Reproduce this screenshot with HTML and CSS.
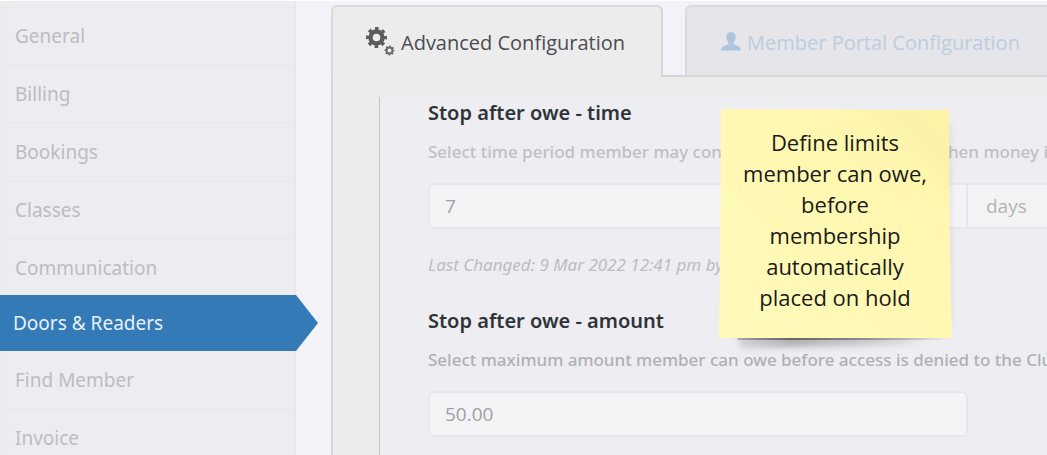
FILE: index.html
```html
<!DOCTYPE html>
<html lang="en">
<head>
    <meta charset="UTF-8">
    <title>Settings - Doors &amp; Readers</title>
    <link rel="stylesheet" href="styles.css">
</head>
<body>
    <div class="page">
        <nav class="sidebar">
            <a href="#">General</a>
            <a href="#">Billing</a>
            <a href="#">Bookings</a>
            <a href="#">Classes</a>
            <a href="#">Communication</a>
            <a href="#" class="active">Doors &amp; Readers</a>
            <a href="#">Find Member</a>
            <a href="#">Invoice</a>
        </nav>
        <main class="main">
            <div class="tabs">
                <a href="#" class="tab active">
                    <svg class="icon-cogs" viewBox="0 0 30 30" aria-hidden="true">
                        <circle cx="11.5" cy="10.5" r="6" fill="none" stroke="#5c5c5e" stroke-width="4.4"/>
                        <circle cx="11.5" cy="10.5" r="9" fill="none" stroke="#5c5c5e" stroke-width="3" stroke-dasharray="3.534 3.534" stroke-dashoffset="1.767"/>
                        <circle cx="24.5" cy="23.5" r="3" fill="none" stroke="#68686a" stroke-width="2"/>
                        <circle cx="24.5" cy="23.5" r="4.3" fill="none" stroke="#68686a" stroke-width="1.4" stroke-dasharray="1.69 1.69" stroke-dashoffset="0.84"/>
                    </svg>
                    Advanced Configuration
                </a>
                <a href="#" class="tab">
                    <svg class="icon-user" viewBox="0 0 20 20" aria-hidden="true">
                        <path d="M10 0.3C6.8 0.3 5.3 2.2 5.4 5C5.5 7.4 6.3 9.4 7.5 10.6C7.8 11.8 7.2 12.4 5.8 13L2.2 14.4C0.6 15.1 0 16.4 0 18.6H20C20 16.4 19.4 15.1 17.8 14.4L14.2 13C12.8 12.4 12.2 11.8 12.5 10.6C13.7 9.4 14.5 7.4 14.6 5C14.7 2.2 13.2 0.3 10 0.3Z" fill="#adc5dd"/>
                    </svg>
                    Member Portal Configuration
                </a>
            </div>
            <div class="panel">
                <form class="settings">
                    <div class="setting">
                        <label class="title" for="oweTime">Stop after owe - time</label>
                        <p class="help">Select time period member may continue to obtain full access when money is owed</p>
                        <div class="field">
                            <input type="text" id="oweTime" value="7">
                            <span class="unit">days</span>
                        </div>
                        <p class="changed">Last Changed: 9 Mar 2022 12:41 pm by</p>
                    </div>
                    <div class="setting">
                        <label class="title" for="oweAmount">Stop after owe - amount</label>
                        <p class="help strong">Select maximum amount member can owe before access is denied to the Club</p>
                        <div class="field single">
                            <input type="text" id="oweAmount" value="50.00">
                        </div>
                    </div>
                </form>
            </div>
        </main>
    </div>
    <aside class="note">
        <svg class="note-paper" viewBox="0 0 260 270" aria-hidden="true">
            <defs>
                <linearGradient id="paper" x1="0" y1="1" x2="1" y2="0">
                    <stop offset="0" stop-color="#fffabc"/>
                    <stop offset="0.78" stop-color="#fff7ae"/>
                    <stop offset="0.88" stop-color="#faf2a8"/>
                    <stop offset="1" stop-color="#fdf4a4"/>
                </linearGradient>
                <linearGradient id="shade" x1="0" y1="0" x2="1" y2="0">
                    <stop offset="0" stop-color="#555" stop-opacity="0.35"/>
                    <stop offset="0.25" stop-color="#555" stop-opacity="0.8"/>
                    <stop offset="0.6" stop-color="#555" stop-opacity="0.5"/>
                    <stop offset="1" stop-color="#555" stop-opacity="0"/>
                </linearGradient>
                <filter id="soft" x="-20%" y="-60%" width="140%" height="220%">
                    <feGaussianBlur stdDeviation="3"/>
                </filter>
            </defs>
            <path d="M28 234L240 234L190 245L30 248Z" fill="url(#shade)" opacity="0.5" filter="url(#soft)"/>
            <path d="M222 20L241 24L242 225L232 225Z" fill="#888" opacity="0.15" filter="url(#soft)"/>
            <path d="M26 237H243L230 240H28Z" fill="url(#shade)"/>
            <path d="M11 9L239 10Q239 130 242 238H9Q11 110 11 9Z" fill="url(#paper)"/>
        </svg>
        <p>Define limits member can owe, before membership automatically placed on hold</p>
    </aside>
</body>
</html>
```
FILE: styles.css
```css
* {
    box-sizing: border-box;
}
body {
    margin: 0;
    font-family: "Open Sans", "Noto Sans", sans-serif;
    font-size: 18px;
    background-color: #f3f2f9;
    overflow: hidden;
}
p {
    margin: 0;
}
a {
    text-decoration: none;
}
.page {
    display: flex;
    min-height: 100vh;
    border-top: 1px solid #fff;
}

/* sidebar */
.sidebar {
    width: 296px;
    flex-shrink: 0;
    padding-top: 5px;
    border-left: 2px solid #efeaea;
    border-right: 2px solid #ebe7e6;
    background-color: #edecf1;
}
.sidebar a {
    display: flex;
    align-items: center;
    height: 58px;
    padding-left: 13px;
    border-top: 2px solid #eae9ed;
    color: #bcbdc1;
    font-family: "Noto Sans", sans-serif;
    font-size: 19px;
}
.sidebar .active {
    position: relative;
    height: 56px;
    margin: -1px -2px;
    border: none;
    background-color: #337ab7;
    color: #e9f1f8;
}
.sidebar .active::after {
    content: "";
    position: absolute;
    top: 0;
    left: 100%;
    width: 22px;
    height: 100%;
    background-color: #337ab7;
    clip-path: polygon(0 0, 100% 50%, 0 100%);
}

/* tabs */
.main {
    flex: 1;
    min-width: 0;
    display: flex;
    flex-direction: column;
    margin-left: 35px;
    padding-top: 4px;
}
.tabs {
    display: flex;
    gap: 22px;
    height: 70px;
}
.tab {
    display: flex;
    align-items: center;
    flex: 1;
    padding: 2px 0 0 34px;
    border: 2px solid #dadadc;
    border-bottom: none;
    border-right: none;
    border-radius: 6px 0 0 0;
    background-color: #e6e5e9;
    color: #bccde0;
    font-size: 20px;
    white-space: nowrap;
}
.tab.active {
    z-index: 1;
    flex: none;
    height: 72px;
    padding: 0 36px 0 32px;
    border-right: 2px solid #d6d6d8;
    border-radius: 6px 6px 0 0;
    background-color: #ececec;
    color: #4b4d51;
}
.icon-cogs {
    width: 30px;
    height: 30px;
    margin-right: 6px;
}
.icon-user {
    width: 20px;
    height: 20px;
    margin-right: 6px;
}

/* settings */
.panel {
    flex: 1;
    padding: 20px 0 0 46px;
    border-top: 2px solid #d6d6d8;
    border-left: 2px solid #d6d6d8;
    background-color: #ececec;
}
.settings {
    height: 100%;
    padding-left: 48px;
    border-left: 1px solid #c4c4c6;
    background-color: #eeedf2;
}
.setting {
    margin-bottom: 25px;
}
.title {
    display: block;
    line-height: 32px;
    color: #303338;
    font-family: "Noto Sans", sans-serif;
    font-size: 20px;
    font-weight: 600;
}
.help {
    overflow: hidden;
    margin: 8px 0 16px;
    line-height: 30px;
    color: #c0bfc4;
    font-family: "Noto Sans", sans-serif;
    font-size: 17px;
    font-weight: 500;
    white-space: nowrap;
}
.help.strong {
    color: #b0b0b4;
}
.field {
    display: flex;
}
.field.single {
    padding-right: 79px;
}
.field input {
    flex: 1;
    min-width: 0;
    height: 46px;
    padding: 0 15px;
    border: 2px solid #e7e6ec;
    border-radius: 6px;
    background-color: #f4f4f6;
    color: #a0a0a3;
    font-family: inherit;
    font-size: 19px;
}
.field input:not(:last-child) {
    border-radius: 6px 0 0 6px;
}
.unit {
    display: flex;
    align-items: center;
    width: 79px;
    padding-left: 18px;
    border: 2px solid #e7e6ec;
    border-left: none;
    border-right: none;
    background-color: #f3f3f5;
    color: #b3b3b7;
    font-size: 19px;
}
.changed {
    margin-top: 21px;
    line-height: 30px;
    color: #bdbcc1;
    font-family: "Noto Sans", sans-serif;
    font-size: 17px;
    font-style: italic;
}

/* sticky note over the form */
.note {
    position: absolute;
    top: 100px;
    left: 710px;
    width: 260px;
    height: 270px;
    padding: 27px 37px 0 27px;
    color: #1a1a1a;
    font-size: 22px;
    line-height: 31px;
    text-align: center;
}
.note-paper {
    position: absolute;
    top: 0;
    left: 0;
    width: 100%;
    height: 100%;
}
.note p {
    position: relative;
}
```
